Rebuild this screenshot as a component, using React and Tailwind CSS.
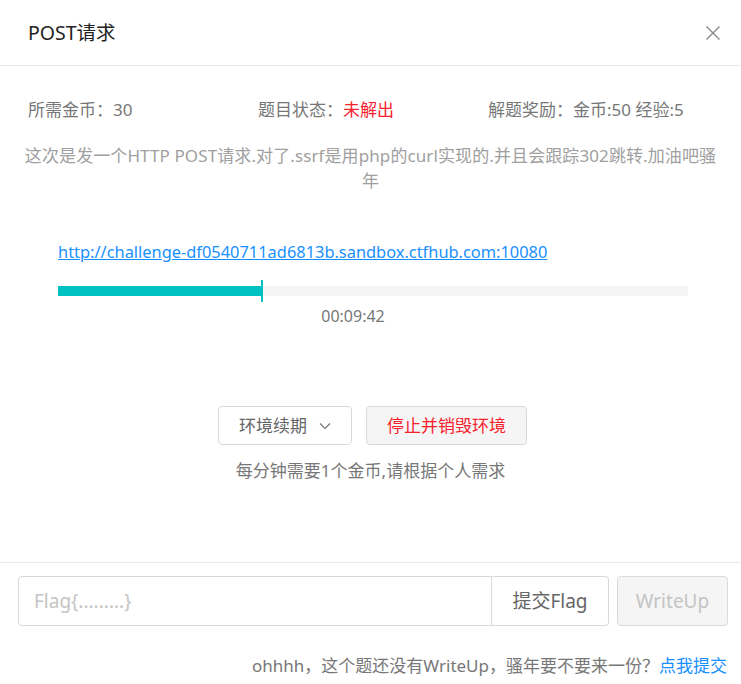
import React from "react";

export default function App() {
  return (
    <div className="w-[741px] h-[684px] bg-white relative overflow-hidden font-['Noto_Sans','Noto_Sans_CJK_SC',sans-serif]">
      {/* header */}
      <div className="h-[66px] border-b border-[#e8e8e8] flex items-center justify-between pl-[28px] pr-[20px]">
        <div className="text-[19.5px] text-[#222]">POST请求</div>
        <svg width="16" height="16" viewBox="0 0 16 16" className="text-[#888]">
          <path d="M1.5 1.5 L14.5 14.5 M14.5 1.5 L1.5 14.5" stroke="currentColor" strokeWidth="1.4" fill="none" />
        </svg>
      </div>

      {/* info */}
      <div className="grid grid-cols-3 pl-[28px] pr-[23px] mt-[32px] text-[17px] leading-[24px] text-[#777]">
        <div>所需金币：30</div>
        <div>
          题目状态：<span className="text-[#f5222d]">未解出</span>
        </div>
        <div>解题奖励：金币:50 经验:5</div>
      </div>

      <div className="mt-[21px] px-[10px] text-center text-[17px] leading-[25px] text-[#a0a0a0] tracking-[0.1px]">
        这次是发一个HTTP POST请求.对了.ssrf是用php的curl实现的.并且会跟踪302跳转.加油吧骚
        <br />年
      </div>

      <div className="mt-[47px] pl-[58px]">
        <a className="text-[16.4px] leading-[24px] text-[#1890ff] underline">
          http://challenge-df0540711ad6813b.sandbox.ctfhub.com:10080
        </a>
      </div>

      <div className="mt-[22px] ml-[58px] w-[630px] h-[10px] bg-[#f5f5f5] relative">
        <div className="h-full w-[204px] bg-[#00c1c1]" />
        <div className="absolute left-[203px] top-[-6px] w-[2px] h-[22px] bg-[#00c1c1]" />
      </div>
      <div className="ml-[58px] w-[590px] mt-[8px] text-center text-[16px] leading-[24px] text-[#777]">
        00:09:42
      </div>

      <div className="mt-[78px] flex justify-center gap-[14px] pl-[4px]">
        <button className="w-[134px] h-[39px] border border-[#d9d9d9] rounded-[4px] bg-white flex items-center justify-center gap-[12px] text-[17px] text-[#666]">
          <span>环境续期</span>
          <svg width="12" height="8" viewBox="0 0 12 8">
            <path d="M1 1.5 L6 6.5 L11 1.5" stroke="#777" strokeWidth="1.2" fill="none" />
          </svg>
        </button>
        <button className="w-[161px] h-[39px] border border-[#d9d9d9] rounded-[4px] bg-[#f5f5f5] text-[17px] text-[#f5222d]">
          停止并销毁环境
        </button>
      </div>
      <div className="mt-[14px] text-center text-[17px] leading-[24px] text-[#777]">
        每分钟需要1个金币,请根据个人需求
      </div>

      <div className="absolute left-0 right-0 top-[562px]">
        <div className="border-t border-[#e8e8e8]" />
        <div className="flex mt-[13px] pl-[18px] pr-[13px] h-[50px] gap-[8px]">
          <div className="flex flex-1">
            <div className="flex-1 border border-[#d9d9d9] rounded-l-[4px] flex items-center px-[15px] text-[19px] text-[#c4c4c4]">
              Flag{"{.........}"}
            </div>
            <button className="w-[117px] border border-l-0 border-[#d9d9d9] rounded-r-[4px] bg-white text-[19px] text-[#666]">
              提交Flag
            </button>
          </div>
          <button className="w-[111px] border border-[#d9d9d9] rounded-[4px] bg-[#f5f5f5] text-[19px] text-[#c4c4c4]">
            WriteUp
          </button>
        </div>
        <div className="mt-[28px] pr-[14px] text-right text-[17px] leading-[24px] text-[#777]">
          ohhhh，这个题还没有WriteUp，骚年要不要来一份？<span className="text-[#1890ff]">点我提交</span>
        </div>
      </div>
    </div>
  );
}
